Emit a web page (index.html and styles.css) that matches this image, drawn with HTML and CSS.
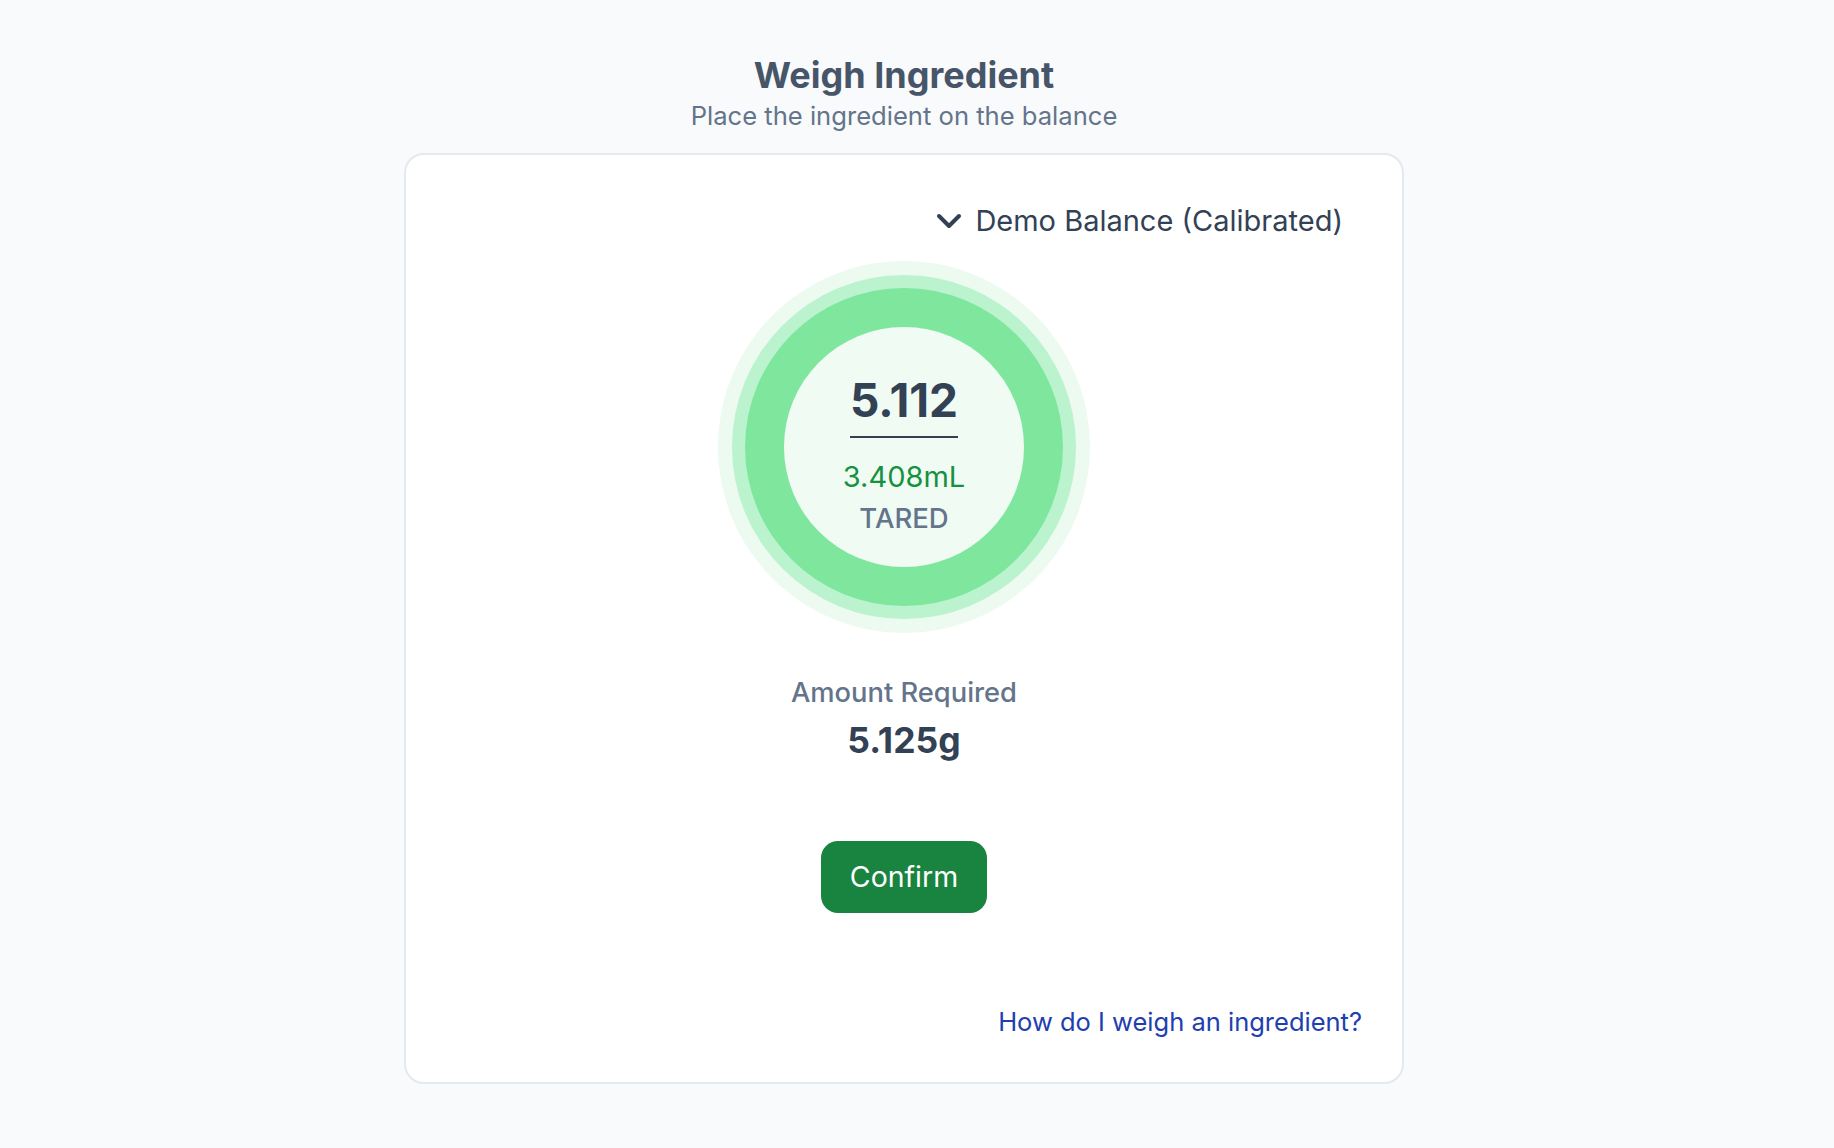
FILE: index.html
```html
<!DOCTYPE html>
<html lang="en">
<head>
<meta charset="utf-8">
<title>Weigh Ingredient</title>
<link rel="stylesheet" href="styles.css">
</head>
<body>
<main class="page">
  <header class="header">
    <h1 class="title">Weigh Ingredient</h1>
    <p class="subtitle">Place the ingredient on the balance</p>
  </header>
  <section class="card">
    <div class="balance-row">
      <button class="balance-select" type="button">
        <svg class="chevron" width="26" height="16" viewBox="0 0 26 16" aria-hidden="true">
          <polyline points="3,3 13,13 23,3" fill="none" stroke="#334155" stroke-width="4" stroke-linecap="round" stroke-linejoin="round"/>
        </svg>
        <span class="balance-name">Demo Balance (Calibrated)</span>
      </button>
    </div>
    <div class="gauge">
      <div class="ring ring-outer">
        <div class="ring ring-mid">
          <div class="ring ring-main">
            <div class="dial">
              <span class="reading">5.112</span>
              <span class="volume">3.408mL</span>
              <span class="status">TARED</span>
            </div>
          </div>
        </div>
      </div>
    </div>
    <div class="required">
      <span class="required-label">Amount Required</span>
      <span class="required-value">5.125g</span>
    </div>
    <button class="confirm" type="button">Confirm</button>
    <div class="help-row">
      <a class="help-link" href="#">How do I weigh an ingredient?</a>
    </div>
  </section>
</main>
</body>
</html>
```
FILE: styles.css
```css
* { box-sizing: border-box; }
html, body { margin: 0; padding: 0; }
body {
  background: #f9fafb;
  font-family: Inter, "Noto Sans", sans-serif;
  color: #334155;
}
.page {
  display: flex;
  flex-direction: column;
  align-items: center;
  padding: 54px 26px 40px 0;
}
.header {
  display: flex;
  flex-direction: column;
  align-items: center;
}
.title {
  margin: 0;
  font-size: 36px;
  line-height: 42px;
  font-weight: 700;
  color: #475569;
}
.subtitle {
  margin: 4.5px 0 0;
  font-size: 25.6px;
  line-height: 30px;
  color: #64748b;
}
.card {
  margin-top: 22.5px;
  width: 1000px;
  background: #ffffff;
  border: 2px solid #e5e9ef;
  border-radius: 20px;
  padding: 48px 40px 45px 40px;
  display: flex;
  flex-direction: column;
  align-items: center;
}
.balance-row {
  align-self: stretch;
  display: flex;
  justify-content: flex-end;
  padding-right: 19px;
}
.balance-select {
  display: flex;
  align-items: center;
  gap: 13px;
  background: none;
  border: 0;
  padding: 0;
  font-family: inherit;
  color: #334155;
  cursor: pointer;
}
.chevron { display: block; }
.balance-name {
  font-size: 29px;
  line-height: 35px;
}
.gauge { margin-top: 23px; }
.ring {
  border-radius: 50%;
  display: flex;
  align-items: center;
  justify-content: center;
}
.ring-outer { width: 372px; height: 372px; padding: 14px; background: #ecfaf0; }
.ring-mid { width: 344px; height: 344px; padding: 13px; background: #bbf3cf; }
.ring-main { width: 318px; height: 318px; padding: 39px; background: #7fe79d; }
.dial {
  width: 240px;
  height: 240px;
  border-radius: 50%;
  background: #f0fbf4;
  display: flex;
  flex-direction: column;
  align-items: center;
  padding-top: 50px;
}
.reading {
  font-size: 46px;
  line-height: 46px;
  font-weight: 700;
  color: #334155;
  padding-bottom: 13px;
  border-bottom: 2px solid #334155;
}
.volume {
  margin-top: 22px;
  font-size: 29px;
  line-height: 34px;
  color: #16913f;
}
.status {
  margin-top: 8px;
  font-size: 27.5px;
  line-height: 32px;
  font-weight: 500;
  color: #64748b;
}
.required {
  margin-top: 44px;
  display: flex;
  flex-direction: column;
  align-items: center;
}
.required-label {
  font-size: 27.3px;
  line-height: 32px;
  font-weight: 500;
  color: #64748b;
}
.required-value {
  margin-top: 11px;
  font-size: 35.5px;
  line-height: 42px;
  font-weight: 700;
  color: #334155;
}
.confirm {
  margin-top: 78.5px;
  background: #19843f;
  color: #ffffff;
  border: 0;
  border-radius: 17px;
  padding: 18.75px 29px;
  font-family: inherit;
  font-size: 28.5px;
  line-height: 35px;
  font-weight: 400;
  cursor: pointer;
}
.help-row {
  align-self: stretch;
  display: flex;
  justify-content: flex-end;
  margin-top: 93.5px;
}
.help-link {
  font-size: 25.5px;
  line-height: 30px;
  color: #1e40af;
  text-decoration: none;
}
```
